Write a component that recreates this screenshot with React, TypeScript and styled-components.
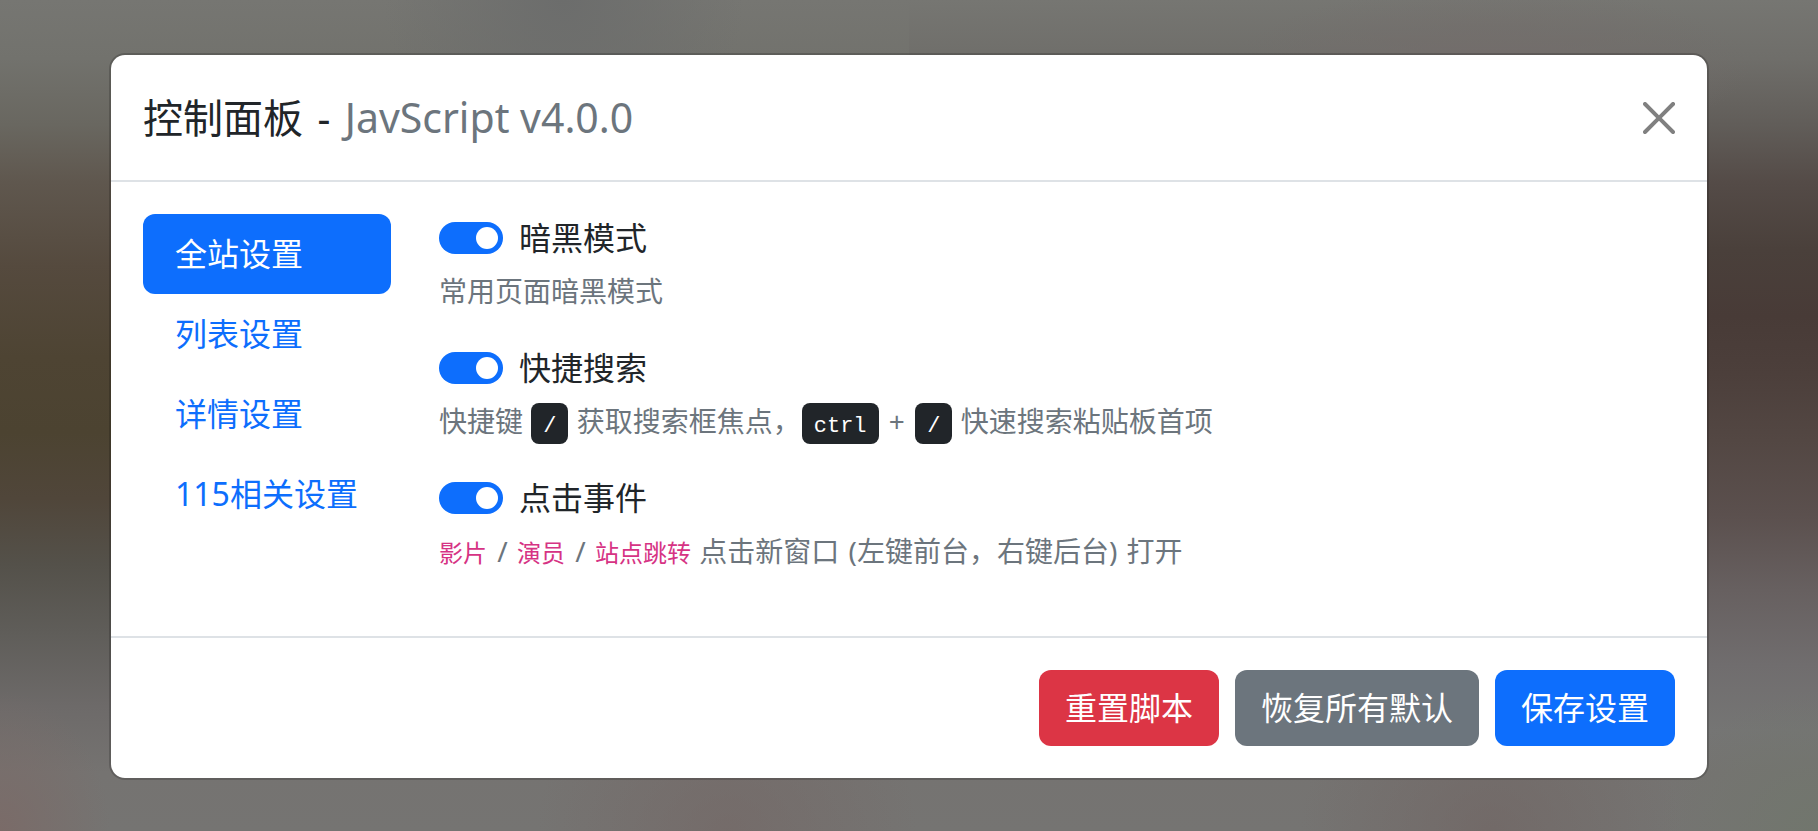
import React, { useState } from 'react';
import styled, { createGlobalStyle, css } from 'styled-components';

const GlobalStyle = createGlobalStyle`
  *, *::before, *::after { box-sizing: border-box; }
  body {
    margin: 0;
    color: #212529;
    background: #747472;
    font-family: "Noto Sans", "Noto Sans CJK SC", sans-serif;
    font-size: 32px;
    line-height: 48px;
  }
  button, input { font: inherit; margin: 0; }
`;

const Backdrop = styled.div`
  min-height: 100vh;
  padding: 26px 24px 24px;
  display: flex;
  align-items: center;
  justify-content: center;
  background:
    radial-gradient(ellipse 110px 140px at 0% 100%, #7a6b68 0%, transparent 100%),
    radial-gradient(ellipse 190px 180px at 40% 100%, #74666499 0%, transparent 100%),
    radial-gradient(ellipse 190px 180px at 82% 100%, #70636199 0%, transparent 100%),
    radial-gradient(ellipse 160px 140px at 100% 100%, #71766d 0%, transparent 100%),
    radial-gradient(ellipse 180px 180px at 31% 0%, #6c6d6c 0%, transparent 100%),
    radial-gradient(ellipse 260px 80px at 82% 8%, #736d6b 0%, transparent 100%),
    linear-gradient(
        #767672 0%, #72726d 7%, #696760 15%, #5f574e 22%, #554a3e 32%,
        #4e4433 43%, #4c4331 52%, #50463a 60%, #54514a 68%, #5f5d59 76%,
        #6d6a69 85%, #757371 93%, #757472 100%
      ) left / 50% 100% no-repeat,
    linear-gradient(
        #767672 0%, #6f6e6a 7%, #615d59 15%, #544b47 22%, #4a403b 30%,
        #483b37 38%, #4c3f3b 45%, #534743 53%, #5b504e 62%, #676060 71%,
        #706d6e 80%, #757574 88%, #757371 93%, #757472 100%
      ) right / 50% 100% no-repeat;
`;

const Dialog = styled.section`
  width: 100%;
  max-width: 1600px;
  background: #fff;
  background-clip: padding-box;
  border: 2px solid rgba(0, 0, 0, 0.175);
  border-radius: 16px;
`;

const Header = styled.header`
  display: flex;
  align-items: center;
  justify-content: space-between;
  padding: 32px;
  border-bottom: 2px solid #dee2e6;
`;

const Title = styled.h1`
  margin: 0;
  font-size: 40px;
  line-height: 60px;
  font-weight: 400;
`;

const Dash = styled.span`
  margin: 0 4px;
`;

const Product = styled.span`
  font-size: 41px;
  color: #6c757d;
`;

const CloseButton = styled.button`
  display: flex;
  padding: 0;
  border: 0;
  background: none;
  color: #808080;
  cursor: pointer;
`;

const Body = styled.div`
  display: flex;
  align-items: flex-start;
  gap: 48px;
  padding: 32px;
`;

const Tabs = styled.nav`
  display: flex;
  flex-direction: column;
  flex-shrink: 0;
  min-width: 248px;
`;

const Tab = styled.a<{ $active: boolean }>`
  padding: 16px 32px;
  border-radius: 12px;
  text-decoration: none;
  color: ${(p) => (p.$active ? '#fff' : '#0d6efd')};
  background: ${(p) => (p.$active ? '#0d6efd' : 'transparent')};
`;

const Settings = styled.div`
  flex: 1;
  min-width: 0;
`;

const Setting = styled.div`
  margin-bottom: 32px;
`;

const SwitchLabel = styled.label`
  display: flex;
  align-items: center;
  gap: 16px;
  width: fit-content;
`;

const Switch = styled.input`
  appearance: none;
  display: flex;
  align-items: center;
  width: 64px;
  height: 32px;
  padding: 5px;
  border-radius: 16px;
  background: #bfbfbf;
  cursor: pointer;

  &::before {
    content: "";
    width: 22px;
    height: 22px;
    border-radius: 50%;
    background: #fff;
  }

  &:checked {
    justify-content: flex-end;
    background: #0d6efd;
  }
`;

const Hint = styled.p`
  margin: 8px 0 0;
  font-size: 28px;
  line-height: 42px;
  color: #6c757d;
`;

const Key = styled.kbd`
  margin: 0 1px;
  padding: 11px 12px 5px;
  border-radius: 8px;
  font-family: "Liberation Mono", monospace;
  font-size: 22px;
  line-height: 24px;
  color: #fff;
  background: #212529;
`;

const Term = styled.code`
  margin-right: 1px;
  font-family: "Liberation Mono", "Noto Sans CJK SC", monospace;
  font-size: 24px;
  line-height: 24px;
  color: #d63384;
`;

const Sign = styled.span`
  margin: 0 2px;
`;

const Footer = styled.footer`
  display: flex;
  flex-wrap: wrap;
  justify-content: flex-end;
  gap: 16px;
  padding: 32px;
  border-top: 2px solid #dee2e6;
`;

const tones = {
  danger: css`background: #dc3545;`,
  secondary: css`background: #6c757d;`,
  primary: css`background: #0d6efd;`,
};

const Button = styled.button<{ $tone: keyof typeof tones }>`
  padding: 14px 26px;
  border: 0;
  border-radius: 12px;
  color: #fff;
  cursor: pointer;
  ${(p) => tones[p.$tone]}
`;

const tabs = ['全站设置', '列表设置', '详情设置', '115相关设置'];

const settings: { label: string; hint: React.ReactNode }[] = [
  { label: '暗黑模式', hint: '常用页面暗黑模式' },
  {
    label: '快捷搜索',
    hint: (
      <>
        快捷键 <Key>/</Key> 获取搜索框焦点，<Key>ctrl</Key> <Sign>+</Sign> <Key>/</Key> 快速搜索粘贴板首项
      </>
    ),
  },
  {
    label: '点击事件',
    hint: (
      <>
        <Term>影片</Term> <Sign>/</Sign> <Term>演员</Term> <Sign>/</Sign> <Term>站点跳转</Term> 点击新窗口{' '}
        <Sign>(左键前台，右键后台)</Sign> 打开
      </>
    ),
  },
];

export default function App() {
  const [active, setActive] = useState(0);

  return (
    <>
      <GlobalStyle />
      <Backdrop>
        <Dialog role="dialog" aria-labelledby="panel-title">
          <Header>
            <Title id="panel-title">
              控制面板 <Dash>-</Dash> <Product>JavScript v4.0.0</Product>
            </Title>
            <CloseButton type="button" aria-label="Close">
              <svg width="32" height="32" viewBox="0 0 16 16" fill="currentColor" aria-hidden="true">
                <path d="M.293.293a1 1 0 0 1 1.414 0L8 6.586 14.293.293a1 1 0 1 1 1.414 1.414L9.414 8l6.293 6.293a1 1 0 0 1-1.414 1.414L8 9.414l-6.293 6.293a1 1 0 0 1-1.414-1.414L6.586 8 .293 1.707a1 1 0 0 1 0-1.414z" />
              </svg>
            </CloseButton>
          </Header>
          <Body>
            <Tabs>
              {tabs.map((name, i) => (
                <Tab
                  key={name}
                  href="#"
                  $active={i === active}
                  onClick={(e) => {
                    e.preventDefault();
                    setActive(i);
                  }}
                >
                  {name}
                </Tab>
              ))}
            </Tabs>
            <Settings>
              {settings.map(({ label, hint }) => (
                <Setting key={label}>
                  <SwitchLabel>
                    <Switch type="checkbox" role="switch" defaultChecked />
                    {label}
                  </SwitchLabel>
                  <Hint>{hint}</Hint>
                </Setting>
              ))}
            </Settings>
          </Body>
          <Footer>
            <Button type="button" $tone="danger">重置脚本</Button>
            <Button type="button" $tone="secondary">恢复所有默认</Button>
            <Button type="button" $tone="primary">保存设置</Button>
          </Footer>
        </Dialog>
      </Backdrop>
    </>
  );
}
